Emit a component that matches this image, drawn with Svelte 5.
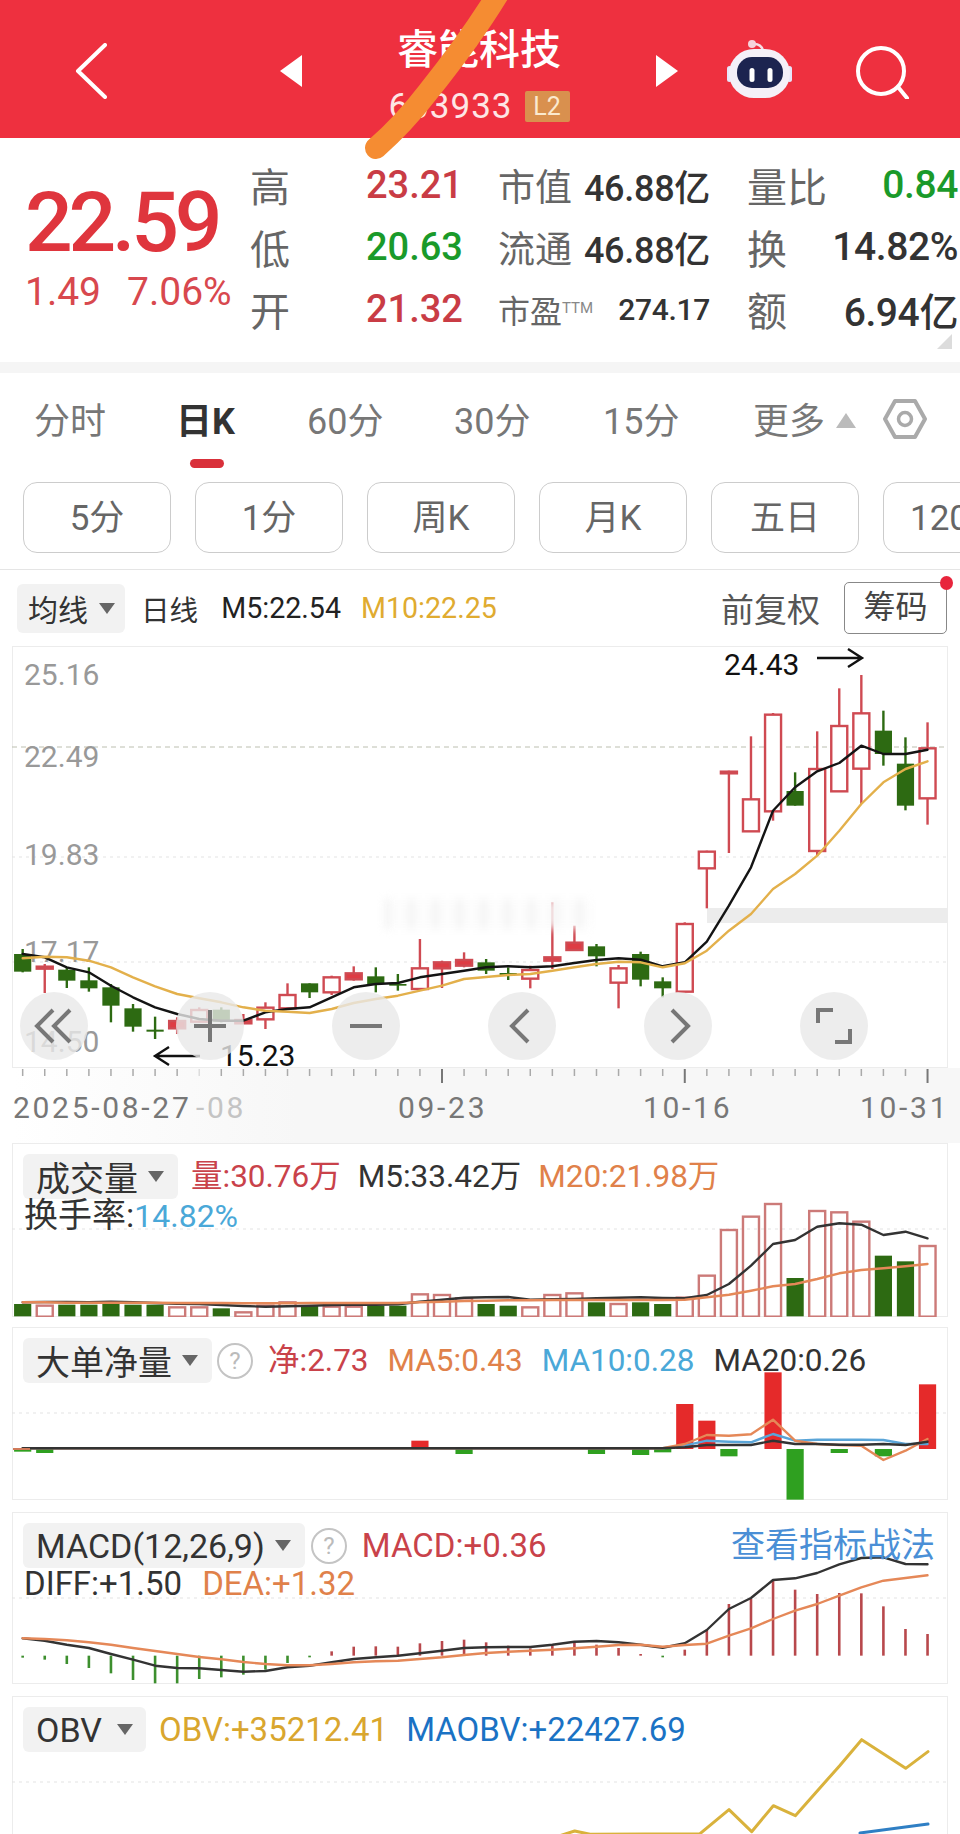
<script>
  // candle rows: high, body top, body bottom, low (zoomed chart units), r = up / g = down
  const candles = [
    ['g',930,945,998,1000],['r',975,980,986,1062],['g',985,992,1025,1047],['g',985,1024,1048,1058],
    ['g',1035,1045,1100,1150],['g',1095,1108,1163,1178],['g',1133,1172,1178,1200],['r',1135,1143,1165,1185],
    ['r',1105,1110,1145,1150],['g',1105,1112,1148,1150],['r',1125,1140,1150,1152],['r',1090,1103,1138,1170],
    ['r',1033,1065,1105,1110],['g',1033,1033,1060,1077],['r',1010,1012,1057,1068],['r',982,1000,1018,1025],
    ['g',985,1012,1035,1060],['g',1005,1035,1040,1055],['r',900,985,1047,1055],['r',965,967,985,1047],
    ['r',940,960,977,985],['g',960,970,995,1005],['g',985,1002,1008,1023],['r',980,990,1016,1048],
    ['r',790,952,962,990],['r',860,908,930,932],['g',915,922,952,982],['r',978,985,1028,1108],
    ['g',938,945,1022,1042],['g',1015,1027,1048,1075],['r',850,852,1055,1055],['r',635,635,685,808],
    ['r',395,395,400,642],['r',292,478,574,574],['r',222,224,514,545],['g',400,456,500,500],
    ['r',277,387,633,650],['r',148,258,454,454],['r',108,220,386,495],['g',215,275,345,380],
    ['g',295,374,500,514],['r',250,325,475,557]
  ];
  const ma5 = [945,955,985,1000,1040,1075,1105,1125,1140,1145,1145,1120,1110,1105,1075,1045,1035,1032,1015,1005,995,985,982,985,982,972,963,958,962,982,970,908,800,685,515,445,397,372,320,345,345,332];
  const ma10 = [958,953,955,965,985,1015,1042,1065,1078,1090,1105,1115,1118,1122,1110,1092,1080,1070,1055,1040,1020,1014,1008,1005,995,985,975,968,970,985,973,935,875,825,750,705,650,575,495,430,390,367];

  const volTops = [525,527,527,527,525,527,527,532,532,538,547,527,517,530,530,530,530,530,493,495,505,525,530,532,495,490,520,522,520,525,503,437,300,260,222,447,243,247,275,380,397,348];
  const volMa5 = [520,519,519,520,518,520,522,524,525,528,531,533,532,530,528,527,527,526,518,512,506,505,504,512,511,510,508,506,505,507,508,498,465,410,345,333,293,283,287,318,308,328];
  const volMa20 = [520,520,521,521,521,521,521,522,522,522,523,523,523,522,522,522,522,522,520,518,516,515,514,514,513,513,513,513,513,513,512,505,497,485,472,465,450,433,423,418,412,405];

  const netBars = { 0:968, 1:972, 18:935, 20:975, 26:975, 28:978, 29:970, 30:825, 31:875, 32:982, 34:730, 35:1112, 37:972, 39:982, 41:766 };
  const flat = (n, v) => Array(n).fill(v);
  const netBlack = [...flat(30,958),955,948,948,948,935,945,945,947,947,945,948,938];
  const netBlue = [...flat(30,958),950,935,938,940,915,935,932,932,932,933,945,945];
  const netOrange = [...flat(30,958),945,918,920,916,872,935,945,948,950,993,965,930];

  const macdBars = [476,482,495,507,523,543,553,553,540,535,527,512,492,475,457,443,442,443,433,426,422,430,440,448,440,430,437,447,465,475,452,392,315,300,243,272,285,282,283,322,390,405];
  const diff = [418,425,437,447,465,482,500,507,508,513,518,516,505,500,490,480,475,470,463,455,447,445,444,444,437,428,426,430,437,446,433,393,330,297,243,238,222,196,177,175,195,196];
  const dea = [418,420,424,430,437,447,456,465,474,481,489,495,499,499,495,490,487,485,480,475,468,462,458,455,452,448,443,438,437,443,438,434,410,388,360,335,315,290,265,245,237,229];

  const obvLine = [[240,1010],[284,996],[330,1006],[660,1004],[747,932],[815,998],[880,920],[946,950],[1079,800],[1145,722],[1211,765],[1277,808],[1344,758]];

  const X = (i) => 22.67 + 22.07 * i;
  const line = (arr, y0) => arr.map((z, i) => `${X(i).toFixed(1)},${(y0 + z / 3).toFixed(1)}`).join(' ');

  const yLabels = [['25.16', 675], ['22.49', 757], ['19.83', 855], ['17.17', 952], ['14.50', 1042]];
  const tabs = ['分时', '日K', '60分', '30分', '15分'];
  const periods = ['5分', '1分', '周K', '月K', '五日', '120分'];
  const quotes = [
    { k: '高', v: '23.21', c: 'up', n: '市值', nv: '46.88亿', m: '量比', mv: '0.84', mc: 'down' },
    { k: '低', v: '20.63', c: 'down', n: '流通', nv: '46.88亿', m: '换', mv: '14.82%', mc: '' },
    { k: '开', v: '21.32', c: 'up', n: '市盈', nv: '274.17', pe: true, m: '额', mv: '6.94亿', mc: '' }
  ];
</script>

<div class="page">
  <header class="top">
    <svg class="back" viewBox="0 0 32 56" width="32" height="56" fill="none" stroke="#fff" stroke-width="4" stroke-linecap="round" stroke-linejoin="round"><path d="M30 2 3 28l27 26" /></svg>
    <span class="tri tri-l"></span>
    <div class="title">
      <div class="name">睿能科技</div>
      <div class="code"><span>603933</span><b>L2</b></div>
    </div>
    <span class="tri tri-r"></span>
    <svg class="robot" viewBox="0 0 65 58" width="65" height="58">
      <path d="M26 4c5 0 8 2 9 7" fill="none" stroke="#f6dfe6" stroke-width="2.5" stroke-linecap="round" />
      <circle cx="24" cy="4" r="4" fill="#f6d3db" />
      <rect x="59" y="26" width="5" height="16" rx="2.5" fill="#e6e6fa" />
      <rect x="-1" y="26" width="5" height="16" rx="2.5" fill="#e6e6fa" />
      <rect x="1" y="9" width="61" height="49" rx="25" fill="#f4f0f8" />
      <rect x="9" y="17" width="46" height="31" rx="15" fill="#1c2450" />
      <rect x="21.5" y="28" width="5" height="14" rx="2.5" fill="#fff" />
      <rect x="39.5" y="28" width="5" height="14" rx="2.5" fill="#fff" />
    </svg>
    <svg class="search" viewBox="0 0 54 54" width="54" height="54" fill="none" stroke="#fff" stroke-width="4" stroke-linecap="round"><circle cx="25" cy="26" r="23" /><path d="m42 42 9 11" /></svg>
  </header>

  <section class="info">
    <div class="price">
      <div class="last">22.59</div>
      <div class="chg"><span>1.49</span><span>7.06%</span></div>
    </div>
    <div class="quotes">
      {#each quotes as q}
        <span class="q-key">{q.k}</span>
        <span class="q-val {q.c}">{q.v}</span>
        <span class="pair">
          {#if q.pe}
            <span class="q-name pe">{q.n}<sup>TTM</sup></span><span class="q-num small">{q.nv}</span>
          {:else}
            <span class="q-name">{q.n}</span><span class="q-num">{q.nv}</span>
          {/if}
        </span>
        <span class="pair">
          <span class="q-key">{q.m}</span><span class="q-num wide {q.mc}">{q.mv}</span>
        </span>
      {/each}
    </div>
    <span class="fold"></span>
  </section>
  <div class="band"></div>

  <nav class="tabs">
    {#each tabs as t, i}
      <span class="tab" class:on={i === 1}>{t}</span>
    {/each}
    <span class="tab more">更多<i></i></span>
    <svg class="hex" viewBox="0 0 44 42" width="44" height="42" fill="none" stroke="#aaa" stroke-width="4" stroke-linejoin="round"><path d="M12 3h20l10 18-10 18H12L2 21z" /><circle cx="22" cy="21" r="6.5" stroke-width="3.5" /></svg>
  </nav>

  <div class="periods">
    {#each periods as p}
      <span class="period">{p}</span>
    {/each}
  </div>

  <div class="ma-row">
    <span class="pill main"><span>均线</span><i></i></span>
    <span class="ma-text">日线</span>
    <span class="ma-text black">M5:22.54</span>
    <span class="ma-text gold">M10:22.25</span>
    <span class="fq">前复权</span>
    <span class="chip">筹码<em></em></span>
  </div>

  <div class="panel kline">
    <svg class="plot" viewBox="12 647 936 422" width="936" height="422">
      <rect class="erase" x="707" y="909" width="241" height="15" />
      <line class="price-line" x1="12" x2="948" y1="748" y2="748" />
      <line class="grid" x1="12" x2="948" y1="858" y2="858" />
      <line class="grid" x1="12" x2="948" y1="963" y2="963" />
      {#each yLabels as [t, y]}
        <text class="axis" x="24" y={y + 11}>{t}</text>
      {/each}
      {#each candles as [c, h, t, b, l], i}
        {@const x = X(i)}
        {@const thin = b - t < 24}
        <line x1={x} x2={x} y1={640 + h / 3} y2={640 + l / 3} class={c === 'r' ? 'wick-r' : 'wick-g'} />
        {#if c === 'g'}
          <rect x={x - 8.6} y={640 + t / 3} width="17.2" height={(b - t) / 3} class="body-g" />
        {:else}
          <rect x={x - 8} y={641 + t / 3} width="16" height={(b - t) / 3} class="body-r" class:thin />
        {/if}
      {/each}
      <polyline class="ma black-l" points={line(ma5, 640)} />
      <polyline class="ma gold-l" points={line(ma10, 640)} />
      <text class="mark" x="724" y="676">24.43</text>
      <path class="arrow" d="M817 659h44m-13-9 14 9-14 9" />
      <text class="mark" x="220" y="1067">15.23</text>
      <path class="arrow" d="M200 1057h-44m13-9-14 9 14 9" />
    </svg>
    <div class="smudge"></div>
    <div class="controls">
      <span class="ctl"><svg viewBox="0 0 68 68" width="68" height="68"><path d="M33 18 17 34l16 16M50 18 34 34l16 16" /></svg></span>
      <span class="ctl"><svg viewBox="0 0 68 68" width="68" height="68"><path d="M18 34h32M34 18v32" /></svg></span>
      <span class="ctl"><svg viewBox="0 0 68 68" width="68" height="68"><path d="M18 34h32" /></svg></span>
      <span class="ctl"><svg viewBox="0 0 68 68" width="68" height="68"><path d="M40 18 24 34l16 16" /></svg></span>
      <span class="ctl"><svg viewBox="0 0 68 68" width="68" height="68"><path d="m28 18 16 16-16 16" /></svg></span>
      <span class="ctl"><svg viewBox="0 0 68 68" width="68" height="68"><path d="M18 31V18h15M50 37v13H35" /></svg></span>
    </div>
  </div>

  <div class="axis-row">
    <svg viewBox="12 1069 936 75" width="936" height="75">
      {#each candles as _, i}
        <line class="tick" class:major={i === 19 || i === 30 || i === 41} class:faint={i === 8} x1={X(i)} x2={X(i)} y1="1070" y2={i === 19 || i === 30 || i === 41 ? 1084 : 1077} />
      {/each}
      <text class="date" x="13" y="1119">2025-08-27</text>
      <text class="date faint-t" x="196" y="1119">-08</text>
      <text class="date" x="398" y="1119">09-23</text>
      <text class="date" x="643" y="1119">10-16</text>
      <text class="date" x="860" y="1119">10-31</text>
    </svg>
  </div>

  <div class="panel vol">
    <svg class="plot" viewBox="12 1144 936 174" width="936" height="174">
      <line class="grid" x1="12" x2="948" y1="1230" y2="1230" />
      {#each volTops as t, i}
        {#if candles[i][0] === 'g'}
          <rect x={X(i) - 8.6} y={1130 + t / 3} width="17.2" height={(562 - t) / 3} class="body-g" />
        {:else}
          <rect x={X(i) - 8} y={1131 + t / 3} width="16" height={(560 - t) / 3} class="vol-r" />
        {/if}
      {/each}
      <polyline class="ma black-l soft" points={line(volMa5, 1130)} />
      <polyline class="ma orange-l" points={line(volMa20, 1130)} />
    </svg>
    <div class="head tight">
      <span class="pill"><span>成交量</span><i></i></span>
      <span class="stat red">量:30.76万</span>
      <span class="stat dark">M5:33.42万</span>
      <span class="stat orange">M20:21.98万</span>
    </div>
    <div class="sub"><span class="dark turn">换手率:</span><span class="sky">14.82%</span></div>
  </div>

  <div class="panel net">
    <svg class="plot" viewBox="12 1328 936 173" width="936" height="173">
      <line class="grid" x1="12" x2="948" y1="1414" y2="1414" />
      {#each Object.entries(netBars) as [k, t]}
        {@const i = +k}
        {@const up = t < 960}
        <rect x={X(i) - 8.6} y={1130 + Math.min(t, 960) / 3} width="17.2" height={Math.abs(t - 960) / 3} class={up ? 'net-up' : 'net-down'} />
      {/each}
      <polyline class="ma blue-l" points={line(netBlue, 1130)} />
      <polyline class="ma orange-l" points={line(netOrange, 1130)} />
      <polyline class="ma black-l soft" points={line(netBlack, 1130)} />
      <line x1="13" x2="30" y1="1450" y2="1450" class="zero" />
    </svg>
    <div class="head net-head">
      <span class="pill"><span>大单净量</span><i></i></span>
      <span class="help">?</span>
      <span class="stat red">净:2.73</span>
      <span class="stat orange">MA5:0.43</span>
      <span class="stat sky">MA10:0.28</span>
      <span class="stat dark">MA20:0.26</span>
    </div>
  </div>

  <div class="panel macd">
    <svg class="plot" viewBox="12 1513 936 172" width="936" height="172">
      <line class="grid" x1="12" x2="948" y1="1599" y2="1599" />
      {#each macdBars as z, i}
        <line x1={X(i)} x2={X(i)} y1={1500 + 470 / 3} y2={1500 + z / 3} class={z > 470 ? 'stick-g' : 'stick-r'} />
      {/each}
      <polyline class="ma black-l soft" points={line(diff, 1500)} />
      <polyline class="ma orange-l" points={line(dea, 1500)} />
    </svg>
    <div class="head macd-head">
      <span class="pill"><span>MACD(12,26,9)</span><i></i></span>
      <span class="help">?</span>
      <span class="stat red big">MACD:+0.36</span>
      <span class="stat link">查看指标战法</span>
    </div>
    <div class="sub macd-sub"><span class="dark">DIFF:+1.50</span><span class="orange">DEA:+1.32</span></div>
  </div>

  <div class="panel obv">
    <svg class="plot" viewBox="12 1697 936 140" width="936" height="140">
      <line class="grid" x1="12" x2="948" y1="1783" y2="1783" />
      <polyline class="ma obv-l" points={obvLine.map(([x, y]) => `${480 + x / 3},${1500 + y / 3}`).join(' ')} />
      <polyline class="ma obv-b" points="860,1834 928,1825" />
    </svg>
    <div class="head obv-head">
      <span class="pill obv-pill"><span>OBV</span><i></i></span>
      <span class="stat gold big">OBV:+35212.41</span>
      <span class="stat navy big">MAOBV:+22427.69</span>
    </div>
  </div>

  <svg class="scribble" viewBox="0 0 960 160" width="960" height="160"><path d="M498-6C476 30 452 62 428 92 408 118 392 134 376 148" /></svg>
</div>

<style>
  :global(body) {
    background: #fff;
  }
  .page {
    position: relative;
    width: 960px;
    height: 1834px;
    overflow: hidden;
    background: #fff;
    font-family: Roboto, "Noto Sans CJK SC", sans-serif;
  }
  .top {
    display: flex;
    align-items: center;
    height: 138px;
    padding-left: 75px;
    background: #ee303f;
    color: #fff;
  }
  .back {
    flex: none;
    margin-top: 4px;
  }
  .tri {
    flex: none;
    width: 0;
    height: 0;
    margin-top: 4px;
    border-top: 16px solid transparent;
    border-bottom: 16px solid transparent;
  }
  .tri-l {
    margin-left: 173px;
    border-right: 22px solid #fff;
  }
  .tri-r {
    border-left: 22px solid #fff;
  }
  .title {
    display: flex;
    flex-direction: column;
    align-items: center;
    align-self: flex-start;
    width: 354px;
    padding-top: 28px;
  }
  .name {
    font-size: 41px;
    line-height: 44px;
    font-weight: 500;
  }
  .code {
    display: flex;
    align-items: center;
    gap: 12px;
    margin-top: 19px;
    font-size: 35px;
    line-height: 31px;
    color: #fde6e6;
    letter-spacing: 1px;
  }
  .code b {
    width: 45px;
    height: 31px;
    border-radius: 2px;
    background: #d9904e;
    font-size: 25px;
    font-weight: 400;
    letter-spacing: 0;
    text-align: center;
    color: #fbe9cf;
  }
  .robot {
    flex: none;
    margin-left: 50px;
    overflow: visible;
  }
  .search {
    flex: none;
    margin-left: 63px;
    margin-top: 6px;
  }

  .info {
    position: relative;
    display: flex;
    height: 224px;
    box-sizing: border-box;
    padding-top: 16px;
  }
  .price {
    width: 250px;
    padding-left: 25px;
    box-sizing: border-box;
    color: #df353d;
  }
  .last {
    margin-top: 27px;
    font-size: 84px;
    line-height: 84px;
    font-weight: 500;
    letter-spacing: -4.2px;
  }
  .chg {
    display: flex;
    gap: 26px;
    margin-top: 5px;
    font-size: 39px;
    line-height: 44px;
    color: #d8484e;
    white-space: nowrap;
  }
  .quotes {
    display: grid;
    grid-template-columns: 116px 135px 209px 250px;
    grid-auto-rows: 62px;
    align-items: center;
  }
  .q-key {
    font-size: 40px;
    color: #666;
  }
  .q-val {
    font-size: 38px;
    font-weight: 500;
  }
  .up {
    color: #c93c45;
  }
  .down {
    color: #1a9a2a;
  }
  .pair {
    display: flex;
    align-items: center;
    justify-content: space-between;
  }
  .pair:nth-child(4n) {
    padding: 0 2px 0 37px;
  }
  .q-name {
    margin-left: -3px;
    font-size: 37px;
    color: #666;
  }
  .q-name.pe {
    font-size: 32px;
  }
  .q-name sup {
    font-size: 15px;
    vertical-align: 10px;
    line-height: 0;
    color: #888;
  }
  .q-num {
    font-size: 36px;
    font-weight: 500;
    color: #333;
    letter-spacing: -0.3px;
  }
  .q-num.wide {
    font-size: 39px;
    letter-spacing: -0.4px;
  }
  .q-num.small {
    font-size: 30px;
  }
  .q-num.down {
    color: #1a9a2a;
  }
  .fold {
    position: absolute;
    right: 8px;
    bottom: 13px;
    border-left: 15px solid transparent;
    border-bottom: 15px solid #dcdcdc;
  }
  .band {
    height: 11px;
    background: #f5f5f5;
  }

  .tabs {
    position: relative;
    height: 94px;
  }
  .tab {
    position: absolute;
    top: 27px;
    font-size: 36px;
    line-height: 44px;
    color: #777;
  }
  .tab:nth-child(1) { left: 34px; }
  .tab:nth-child(2) { left: 176px; }
  .tab:nth-child(3) { left: 307px; }
  .tab:nth-child(4) { left: 454px; }
  .tab:nth-child(5) { left: 603px; }
  .tab.more { left: 753px; }
  .tab.on {
    font-weight: 700;
    color: #333;
  }
  .tab.on::after {
    content: "";
    position: absolute;
    left: 14px;
    top: 59px;
    width: 34px;
    height: 9px;
    border-radius: 5px;
    background: #d9303a;
  }
  .tab.more i {
    position: absolute;
    left: 83px;
    top: 13px;
    border-left: 10px solid transparent;
    border-right: 10px solid transparent;
    border-bottom: 15px solid #bbb;
  }
  .hex {
    position: absolute;
    left: 883px;
    top: 25px;
  }

  .periods {
    display: flex;
    gap: 24px;
    margin-top: 15px;
    padding-left: 23px;
    overflow: hidden;
  }
  .period {
    flex: none;
    width: 148px;
    height: 71px;
    box-sizing: border-box;
    border: 1px solid #ccc;
    border-radius: 14px;
    font-size: 35px;
    line-height: 71px;
    text-align: center;
    color: #666;
  }
  .ma-row {
    position: relative;
    display: flex;
    align-items: center;
    height: 77px;
    margin-top: 16px;
    padding-left: 17px;
    border-top: 1px solid #e5e5e5;
    box-sizing: border-box;
  }
  .pill {
    flex: none;
    display: flex;
    align-items: center;
    justify-content: space-between;
    height: 45px;
    box-sizing: border-box;
    padding: 0 14px 0 13px;
    border-radius: 6px;
    background: #f2f2f2;
    font-size: 34px;
    color: #333;
    gap: 10px;
  }
  .pill i {
    flex: none;
    border-left: 8px solid transparent;
    border-right: 8px solid transparent;
    border-top: 11px solid #666;
  }
  .pill.main {
    height: 49px;
    width: 108px;
    padding: 0 10px 0 11px;
    font-size: 30px;
    gap: 8px;
  }
  .obv-pill {
    padding-right: 13px;
    width: 123px;
  }
  .ma-text {
    margin-left: 16px;
    font-size: 28.6px;
    color: #333;
  }
  .ma-text.black {
    margin-left: 23px;
    color: #222;
  }
  .ma-text.gold {
    margin-left: 20px;
    color: #e0ab30;
  }
  .fq {
    margin-left: auto;
    font-size: 33px;
    color: #555;
  }
  .chip {
    position: relative;
    width: 103px;
    height: 52px;
    margin: 0 13px 0 24px;
    box-sizing: border-box;
    border: 1px solid #888;
    border-radius: 5px;
    font-size: 32px;
    line-height: 48px;
    text-align: center;
    color: #444;
  }
  .chip em {
    position: absolute;
    right: -7px;
    top: -7px;
    width: 13px;
    height: 14px;
    border-radius: 50%;
    background: #e8253c;
  }

  .panel {
    position: relative;
    width: 936px;
    margin-left: 12px;
    box-sizing: border-box;
    border: 1px solid #ececec;
  }
  .plot {
    position: absolute;
    left: -1px;
    top: -1px;
  }
  .kline {
    height: 422px;
  }
  .vol {
    height: 174px;
  }
  .net {
    height: 173px;
    margin-top: 10px;
  }
  .macd {
    height: 172px;
    margin-top: 12px;
  }
  .obv {
    height: 140px;
    margin-top: 12px;
  }
  .grid {
    stroke: #e3e3e3;
    stroke-width: 1;
    stroke-dasharray: 3 4;
  }
  .price-line {
    stroke: #bcbfb0;
    stroke-width: 1;
    stroke-dasharray: 5 4;
  }
  .erase {
    fill: #ececec;
  }
  .axis {
    font-size: 30px;
    fill: #999;
  }
  .wick-r,
  .wick-g {
    stroke-width: 2.4;
  }
  .wick-r {
    stroke: #cf4a52;
  }
  .wick-g {
    stroke: #2d6a12;
  }
  .body-g {
    fill: #2d6a12;
  }
  .body-r {
    fill: #fff;
    stroke: #cf4a52;
    stroke-width: 2.4;
  }
  .body-r.thin {
    fill: #de3c44;
  }
  .vol-r {
    fill: none;
    stroke: #cc7a78;
    stroke-width: 2.4;
  }
  .net-up {
    fill: #e52a2a;
  }
  .net-down {
    fill: #2fa020;
  }
  .stick-r,
  .stick-g {
    stroke-width: 2.6;
  }
  .stick-r {
    stroke: #b8484c;
  }
  .stick-g {
    stroke: #3d8f2e;
  }
  .zero {
    stroke: #d07a5a;
    stroke-width: 2;
  }
  .ma {
    fill: none;
    stroke-width: 2.4;
    stroke-linejoin: round;
    stroke-linecap: round;
  }
  .black-l {
    stroke: #141414;
  }
  .black-l.soft {
    stroke: #333;
  }
  .gold-l {
    stroke: #e3b04b;
  }
  .orange-l {
    stroke: #e58858;
  }
  .blue-l {
    stroke: #5aa5d8;
  }
  .obv-l {
    stroke: #d9b23c;
    stroke-width: 3;
  }
  .obv-b {
    stroke: #2f7fc4;
    stroke-width: 3;
  }
  .mark {
    font-size: 30px;
    fill: #111;
  }
  .arrow {
    fill: none;
    stroke: #111;
    stroke-width: 2.4;
  }
  .smudge {
    position: absolute;
    left: 372px;
    top: 252px;
    width: 210px;
    height: 30px;
    background: repeating-linear-gradient(90deg, #ededed 0 5px, #fdfdfd 5px 24px);
    filter: blur(4px);
    opacity: 0.85;
  }
  .controls {
    position: absolute;
    left: 7px;
    bottom: 7px;
    display: flex;
    gap: 88px;
  }
  .ctl {
    display: block;
    width: 68px;
    height: 68px;
    border-radius: 50%;
    background: rgba(232, 232, 232, 0.8);
  }
  .ctl svg {
    display: block;
    fill: none;
    stroke: #777;
    stroke-width: 4;
  }
  .axis-row {
    height: 75px;
    margin-left: 12px;
    background: linear-gradient(90deg, #fff 0, #f7f7f7 30%, #f7f7f7 100%);
  }
  .axis-row svg {
    display: block;
  }
  .tick {
    stroke: #aaa;
    stroke-width: 1.5;
  }
  .tick.major {
    stroke: #777;
    stroke-width: 2;
  }
  .tick.faint {
    stroke: #ddd;
  }
  .date {
    font-size: 30px;
    fill: #777;
    letter-spacing: 2.7px;
  }
  .date.faint-t {
    fill: #c4c4c4;
  }

  .head {
    position: relative;
    display: flex;
    align-items: center;
    gap: 20px;
    padding: 10px 0 0 10px;
  }
  .tight {
    gap: 17px;
  }
  .tight .pill {
    margin-right: -4px;
  }
  .net-head {
    gap: 19px;
  }
  .net-head .help {
    margin-right: -4px;
  }
  .macd-head .help {
    margin-right: -5px;
  }
  .obv-head {
    gap: 18px;
  }
  .obv-head .pill {
    margin-right: -5px;
  }
  .stat {
    font-size: 31.5px;
    line-height: 45px;
    white-space: nowrap;
  }
  .stat.big {
    font-size: 33px;
  }
  .red {
    color: #c9424a;
  }
  .dark {
    color: #333;
  }
  .orange {
    color: #e0814a;
  }
  .sky {
    color: #4aa8d8;
  }
  .gold {
    color: #d9a62e;
  }
  .navy {
    color: #1a72c4;
  }
  .stat.link {
    margin-left: auto;
    margin-right: 12px;
    font-size: 34px;
    color: #4a8fd6;
  }
  .sub {
    position: relative;
    padding-left: 11px;
    font-size: 32px;
    line-height: 32px;
    white-space: nowrap;
  }
  .turn {
    font-size: 34px;
  }
  .macd-sub {
    display: flex;
    gap: 20px;
    font-size: 33px;
  }
  .help {
    flex: none;
    width: 32px;
    height: 32px;
    margin-left: -14px;
    margin-right: -2px;
    border: 2px solid #c4c4c4;
    border-radius: 50%;
    font-size: 24px;
    line-height: 32px;
    text-align: center;
    color: #bbb;
  }
  .scribble {
    position: absolute;
    left: 0;
    top: 0;
    fill: none;
    stroke: #f58c32;
    stroke-width: 22;
    stroke-linecap: round;
  }
</style>
